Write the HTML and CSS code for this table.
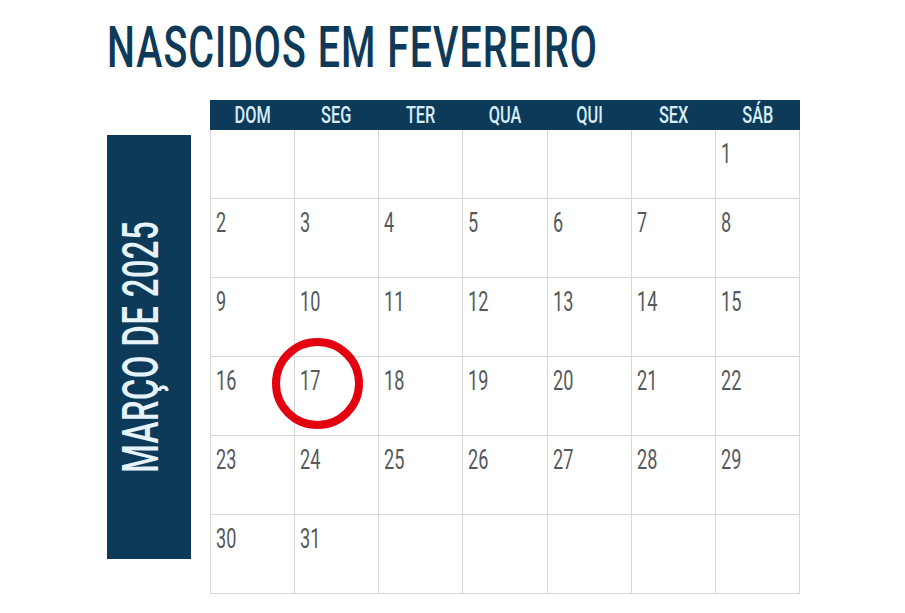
FILE: index.html
```html
<!DOCTYPE html>
<html lang="pt">
<head>
<meta charset="utf-8">
<title>Nascidos em Fevereiro</title>
<link rel="stylesheet" href="styles.css">
</head>
<body>
<div class="page">
  <h1 class="title"><span class="title-text">NASCIDOS EM FEVEREIRO</span></h1>
  <div class="main">
    <div class="side"><span class="side-text">MARÇO DE 2025</span></div>
    <div class="cal">
      <div class="head">
        <div class="day"><span>DOM</span></div>
        <div class="day"><span>SEG</span></div>
        <div class="day"><span>TER</span></div>
        <div class="day"><span>QUA</span></div>
        <div class="day"><span>QUI</span></div>
        <div class="day"><span>SEX</span></div>
        <div class="day"><span>SÁB</span></div>
      </div>
      <div class="grid">
        <div class="cell"></div><div class="cell"></div><div class="cell"></div><div class="cell"></div><div class="cell"></div><div class="cell"></div><div class="cell"><span>1</span></div>
        <div class="cell"><span>2</span></div><div class="cell"><span>3</span></div><div class="cell"><span>4</span></div><div class="cell"><span>5</span></div><div class="cell"><span>6</span></div><div class="cell"><span>7</span></div><div class="cell"><span>8</span></div>
        <div class="cell"><span>9</span></div><div class="cell"><span>10</span></div><div class="cell"><span>11</span></div><div class="cell"><span>12</span></div><div class="cell"><span>13</span></div><div class="cell"><span>14</span></div><div class="cell"><span>15</span></div>
        <div class="cell"><span>16</span></div><div class="cell"><span>17</span></div><div class="cell"><span>18</span></div><div class="cell"><span>19</span></div><div class="cell"><span>20</span></div><div class="cell"><span>21</span></div><div class="cell"><span>22</span></div>
        <div class="cell"><span>23</span></div><div class="cell"><span>24</span></div><div class="cell"><span>25</span></div><div class="cell"><span>26</span></div><div class="cell"><span>27</span></div><div class="cell"><span>28</span></div><div class="cell"><span>29</span></div>
        <div class="cell"><span>30</span></div><div class="cell"><span>31</span></div><div class="cell"></div><div class="cell"></div><div class="cell"></div><div class="cell"></div><div class="cell"></div>
      </div>
      <div class="circle"></div>
    </div>
  </div>
</div>
</body>
</html>
```
FILE: styles.css
```css
* { box-sizing: border-box; }
html, body { margin: 0; padding: 0; background: #ffffff; }
body { font-family: Roboto, "Liberation Sans", sans-serif; }

.page {
  width: 905px;
  height: 613px;
  padding-left: 107px;
  overflow: hidden;
}

.title {
  margin: 20px 0 0 0;
  height: 56px;
  font-size: 57px;
  line-height: 56px;
  font-weight: 500;
  color: #0d3a58;
  white-space: nowrap;
}
.title-text {
  display: inline-block;
  transform: scaleX(0.69);
  transform-origin: left center;
  letter-spacing: 1.5px;
}

.main {
  display: flex;
  gap: 19px;
  margin-top: 24px;
  align-items: flex-start;
}

.side {
  width: 84px;
  height: 424px;
  margin-top: 35px;
  background: #0d3a58;
  display: flex;
  align-items: center;
  justify-content: center;
  padding-right: 17px;
}
.side-text {
  display: block;
  white-space: nowrap;
  font-size: 50px;
  line-height: 50px;
  font-weight: 500;
  color: #e6f3fa;
  transform: rotate(-90deg) scaleX(0.66);
  flex: none;
  letter-spacing: 0.5px;
}

.cal {
  position: relative;
  width: 590px;
}

.head {
  display: grid;
  grid-template-columns: repeat(7, 1fr);
  height: 30px;
  background: #0d3a58;
}
.day {
  display: flex;
  align-items: center;
  justify-content: center;
  color: #d8edf8;
  font-size: 24px;
  line-height: 30px;
  font-weight: 500;
}
.day span {
  display: inline-block;
  transform: scaleX(0.68);
}

.grid {
  display: grid;
  grid-template-columns: repeat(7, 1fr);
  grid-template-rows: 69px repeat(5, 79px);
  border-left: 1px solid #d6d6d6;
}
.cell {
  border-right: 1px solid #d6d6d6;
  border-bottom: 1px solid #d6d6d6;
  padding: 11px 0 0 5px;
}
.cell span {
  display: inline-block;
  font-size: 27px;
  line-height: 27px;
  color: #55595d;
  transform: scaleX(0.67);
  transform-origin: left center;
}

.circle {
  position: absolute;
  left: 62px;
  top: 238px;
  width: 91px;
  height: 91px;
  border: 8px solid #e3000f;
  border-radius: 50%;
}
```
